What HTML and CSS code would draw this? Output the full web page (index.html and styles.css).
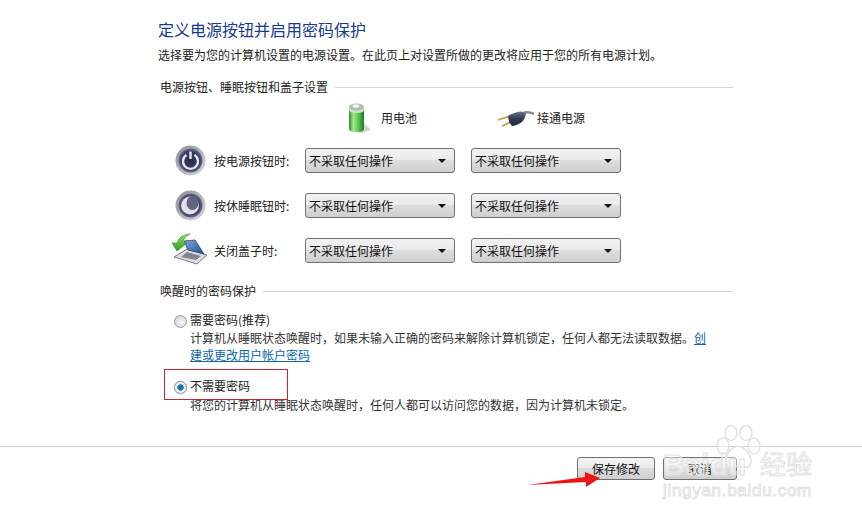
FILE: index.html
```html
<!DOCTYPE html>
<html lang="zh-CN">
<head>
    <meta charset="UTF-8" />
    <title>定义电源按钮并启用密码保护</title>
    <link rel="stylesheet" href="styles.css">
</head>
<body>
    <svg class="defs" width="0" height="0">
        <defs>
            <linearGradient id="bat" x1="0" x2="1" y1="0" y2="0">
                <stop offset="0" stop-color="#2c8f30" />
                <stop offset="0.3" stop-color="#a5e88e" />
                <stop offset="0.65" stop-color="#55c24a" />
                <stop offset="1" stop-color="#1c7c24" />
            </linearGradient>
            <linearGradient id="bezel" x1="0" x2="1" y1="0" y2="1">
                <stop offset="0" stop-color="#8d8d95" />
                <stop offset="1" stop-color="#d8d8dc" />
            </linearGradient>
            <radialGradient id="knob">
                <stop offset="0" stop-color="#2c2d4c" />
                <stop offset="0.75" stop-color="#3b3d62" />
                <stop offset="1" stop-color="#6a6c8e" />
            </radialGradient>
            <linearGradient id="screen" x1="0" x2="1" y1="0" y2="1">
                <stop offset="0" stop-color="#7fa8dc" />
                <stop offset="1" stop-color="#1f4f9c" />
            </linearGradient>
            <linearGradient id="arrow" x1="0" x2="0" y1="0" y2="1">
                <stop offset="0" stop-color="#8fe060" />
                <stop offset="1" stop-color="#2aa01c" />
            </linearGradient>
            <linearGradient id="plug" x1="0" x2="0" y1="0" y2="1">
                <stop offset="0" stop-color="#6d7488" />
                <stop offset="0.5" stop-color="#343a50" />
                <stop offset="1" stop-color="#23283a" />
            </linearGradient>
        </defs>
    </svg>

    <div class="content">
        <h1>定义电源按钮并启用密码保护</h1>
        <p class="intro">选择要为您的计算机设置的电源设置。在此页上对设置所做的更改将应用于您的所有电源计划。</p>

        <div class="group-title"><span>电源按钮、睡眠按钮和盖子设置</span></div>

        <div class="power-head">
            <div class="power-col power-battery">
                <svg width="24" height="30" viewBox="0 0 24 30">
                    <path d="M18 21 L24 27 L14 30 L10 29 Z" fill="#d4d4d4" />
                    <path d="M2 4 V26 Q2 29 9.500 29 Q17 29 17 26 V4 Z" fill="url(#bat)" />
                    <path d="M2 4 V7 Q2 10 9.500 10 Q17 10 17 7 V4 Z" fill="#c5e6bf" />
                    <ellipse cx="9.500" cy="4" rx="7.500" ry="3.500" fill="#aebdb2" />
                    <ellipse cx="9" cy="3" rx="3.500" ry="1.800" fill="#f2f4f2" />
                </svg>
                <span>用电池</span>
            </div>
            <div class="power-col power-plug">
                <svg width="36" height="20" viewBox="0 0 36 20">
                    <path d="M0 12 L12 8" stroke="#c9a044" stroke-width="1.800" />
                    <path d="M4 18 L14 13.500" stroke="#c9a044" stroke-width="1.800" />
                    <path d="M24 5.500 Q30 3 36 6" stroke="#8a8e96" stroke-width="2.500" fill="none" />
                    <path d="M10 8 Q16 4 23 3.500 L28 5 Q27 11 24 14 Q18 18 14 18 L11 14 Z" fill="url(#plug)" />
                </svg>
                <span>接通电源</span>
            </div>
        </div>

        <div class="power-row">
            <svg class="row-icon" width="32" height="32" viewBox="0 0 32 32">
                <circle cx="16.500" cy="16.500" r="15" fill="url(#bezel)" />
                <circle cx="16.500" cy="16.500" r="12" fill="url(#knob)" />
                <path d="M12.500 11 A7.500 7.500 0 1 0 20.500 11" fill="none" stroke="#e4e6f0" stroke-width="2.400" />
                <path d="M16.500 7.500 V15" stroke="#e4e6f0" stroke-width="2.400" />
            </svg>
            <span class="row-label">按电源按钮时:</span>
            <div class="combo">不采取任何操作</div>
            <div class="combo">不采取任何操作</div>
        </div>
        <div class="power-row">
            <svg class="row-icon" width="32" height="32" viewBox="0 0 32 32">
                <circle cx="16.500" cy="16.500" r="15" fill="url(#bezel)" />
                <circle cx="16.500" cy="16.500" r="12" fill="url(#knob)" />
                <circle cx="16" cy="16.500" r="9" fill="#dfe1ea" />
                <ellipse cx="18.500" cy="14" rx="6" ry="7" fill="#62647f" />
            </svg>
            <span class="row-label">按休睡眠钮时:</span>
            <div class="combo">不采取任何操作</div>
            <div class="combo">不采取任何操作</div>
        </div>
        <div class="power-row">
            <svg class="row-icon" width="32" height="32" viewBox="0 0 32 32">
                <path d="M0 23 L13 15 L33 21 L23 30 Z" fill="#dcdde0" stroke="#5a5e68" stroke-width="0.800" />
                <path d="M7 23 L13 18 L27 22 L22 26 Z" fill="#80858f" />
                <path d="M10 7 L21 6 L30 20 L14 16 Z" fill="url(#screen)" stroke="#3a4252" stroke-width="0.800" />
                <path d="M3 17 L-2 9 L3 9 Q5 1 16 0 Q9 3 9 9 L13 9 Z" fill="url(#arrow)" stroke="#2c8a1f" stroke-width="0.600" />
            </svg>
            <span class="row-label">关闭盖子时:</span>
            <div class="combo">不采取任何操作</div>
            <div class="combo">不采取任何操作</div>
        </div>

        <div class="group-title wake-title"><span>唤醒时的密码保护</span></div>

        <div class="option">
            <span class="radio"></span>
            <div class="option-text">
                <div class="option-name">需要密码(推荐)</div>
                <div class="option-desc">计算机从睡眠状态唤醒时，如果未输入正确的密码来解除计算机锁定，任何人都无法读取数据。<a href="#">创建或更改用户帐户密码</a></div>
            </div>
        </div>
        <div class="option option-second">
            <span class="radio radio-on"></span>
            <div class="option-text">
                <div class="option-name">不需要密码</div>
                <div class="option-desc">将您的计算机从睡眠状态唤醒时，任何人都可以访问您的数据，因为计算机未锁定。</div>
            </div>
            <div class="red-box"></div>
        </div>
    </div>

    <div class="footer">
        <button class="btn btn-save">保存修改</button>
        <button class="btn btn-cancel">取消</button>
    </div>

    <svg class="red-arrow" width="80" height="34" viewBox="0 0 80 34">
        <path d="M1 18 L59 10 L59 5 L74 11 L60 20 L60 15 Z" fill="#ee1414" />
    </svg>

    <div class="watermark">
        <svg class="paw" width="48" height="50" viewBox="0 0 48 50">
            <g fill="#fff" fill-opacity="0.4" stroke="#e2e2e2" stroke-width="1.500">
                <ellipse cx="7" cy="21" rx="6" ry="8" />
                <ellipse cx="15" cy="8" rx="6" ry="7.500" />
                <ellipse cx="30" cy="8" rx="6" ry="7.500" />
                <ellipse cx="38" cy="21" rx="6" ry="8" />
                <path d="M22 21 Q32 23 35 34 Q36 44 28 42 Q22 41 17 42 Q9 44 10 34 Q12 23 22 21 Z" />
            </g>
        </svg>
        <div class="wm-logo">Baidu</div>
        <div class="wm-cn">经验</div>
        <div class="wm-url">jingyan.baidu.com</div>
    </div>
</body>
</html>
```

FILE: styles.css
```css
body {
    margin: 0;
    height: 519px;
    overflow: hidden;
    background: #fff;
    color: #222;
    font-family: "Noto Sans CJK SC", "Liberation Sans", sans-serif;
    font-size: 12px;
    position: relative;
}

.defs {
    position: absolute;
}

.content {
    width: 575px;
    padding: 18px 0 0 158px;
}

h1 {
    margin: 0;
    font-size: 16px;
    font-weight: normal;
    line-height: 22px;
    color: #18398f;
}

.intro {
    margin: 6px 0 0;
    line-height: 18px;
    white-space: nowrap;
}

.group-title {
    display: flex;
    align-items: center;
    gap: 7px;
    margin: 14px 0 0 2px;
    line-height: 18px;
    white-space: nowrap;
}

    .group-title::after {
        content: "";
        flex: 1;
        height: 1px;
        background: #d5d5d5;
    }

.wake-title {
    margin-top: 16px;
}

.power-head {
    display: flex;
    height: 33px;
    margin-top: 5px;
    padding-left: 189px;
}

.power-col {
    display: flex;
    align-items: center;
    gap: 10px;
}

.power-battery {
    width: 151px;
}

.power-plug {
    gap: 3px;
}

.power-row {
    display: flex;
    align-items: center;
    height: 32px;
    margin-top: 13px;
    padding-left: 16px;
}

    .power-row .combo + .combo {
        margin-left: 16px;
    }

.power-head + .power-row {
    margin-top: 10px;
}

.row-icon {
    flex: none;
    overflow: visible;
}

.row-label {
    width: 91px;
    margin-left: 8px;
    white-space: nowrap;
}

.combo {
    box-sizing: border-box;
    position: relative;
    width: 150px;
    height: 25px;
    padding-left: 3px;
    line-height: 23px;
    border: 1px solid #707070;
    border-radius: 3px;
    background: linear-gradient(#f2f2f2 0%, #ebebeb 45%, #dddddd 50%, #cfcfcf 100%);
    color: #111;
}

    .combo::after {
        content: "";
        position: absolute;
        right: 8px;
        top: 10px;
        border-left: 4px solid transparent;
        border-right: 4px solid transparent;
        border-top: 4px solid #111;
    }

.option {
    display: flex;
    gap: 4px;
    position: relative;
    margin: 10px 0 0 16px;
}

.option-second {
    margin-top: 13px;
}

    .option-second .option-desc {
        margin-top: 1px;
    }

.radio {
    flex: none;
    box-sizing: border-box;
    width: 13px;
    height: 13px;
    margin: 5px -1px 0 0;
    border: 1px solid #9a9b9b;
    border-radius: 50%;
    background: radial-gradient(circle at 60% 60%, #f8f8f8, #c8c8c8);
}

.radio-on {
    background: radial-gradient(circle, #0f5f9c 0, #2f86c0 3px, #eef3f6 3.500px);
    box-shadow: 0 0 1px #666;
}

.option-text {
    width: 520px;
}

.option-name {
    line-height: 19px;
}

.option-desc {
    line-height: 17px;
    color: #333;
}

    .option-desc a {
        color: #0d66a8;
        text-decoration: underline;
    }

.red-box {
    position: absolute;
    left: -10px;
    top: -7px;
    width: 122px;
    height: 29px;
    border: 1px solid #c8262c;
}

.footer {
    display: flex;
    gap: 8px;
    position: absolute;
    left: 0;
    right: 0;
    top: 446px;
    padding: 10px 0 0 577px;
    border-top: 1px solid #cfcfcf;
}

.btn {
    box-sizing: border-box;
    height: 23px;
    padding: 0;
    font-family: inherit;
    font-size: 12px;
    line-height: 20px;
    color: #111;
    border: 1px solid #707070;
    border-radius: 3px;
    background: linear-gradient(#f4f4f4 0%, #ebebeb 45%, #dddddd 50%, #cfcfcf 100%);
}

.btn-save {
    width: 78px;
}

.btn-cancel {
    width: 74px;
}

.red-arrow {
    position: absolute;
    left: 526px;
    top: 467px;
}

.watermark {
    position: absolute;
    left: 663px;
    top: 424px;
    width: 160px;
    height: 80px;
    color: rgba(255, 255, 255, 0.4);
    -webkit-text-stroke: 1px #e2e2e2;
    font-family: "Liberation Sans", sans-serif;
    white-space: nowrap;
}

.paw {
    position: absolute;
    left: 53px;
    top: 1px;
}

.wm-logo {
    position: absolute;
    left: 0;
    top: 24px;
    font-size: 30px;
    font-weight: bold;
    line-height: 34px;
}

.wm-cn {
    position: absolute;
    left: 97px;
    top: 22px;
    font-size: 26px;
    line-height: 34px;
    font-family: "Noto Sans CJK SC", sans-serif;
}

.wm-url {
    position: absolute;
    left: 0;
    top: 56px;
    font-size: 17px;
    line-height: 22px;
    letter-spacing: 0.7px;
}
```
